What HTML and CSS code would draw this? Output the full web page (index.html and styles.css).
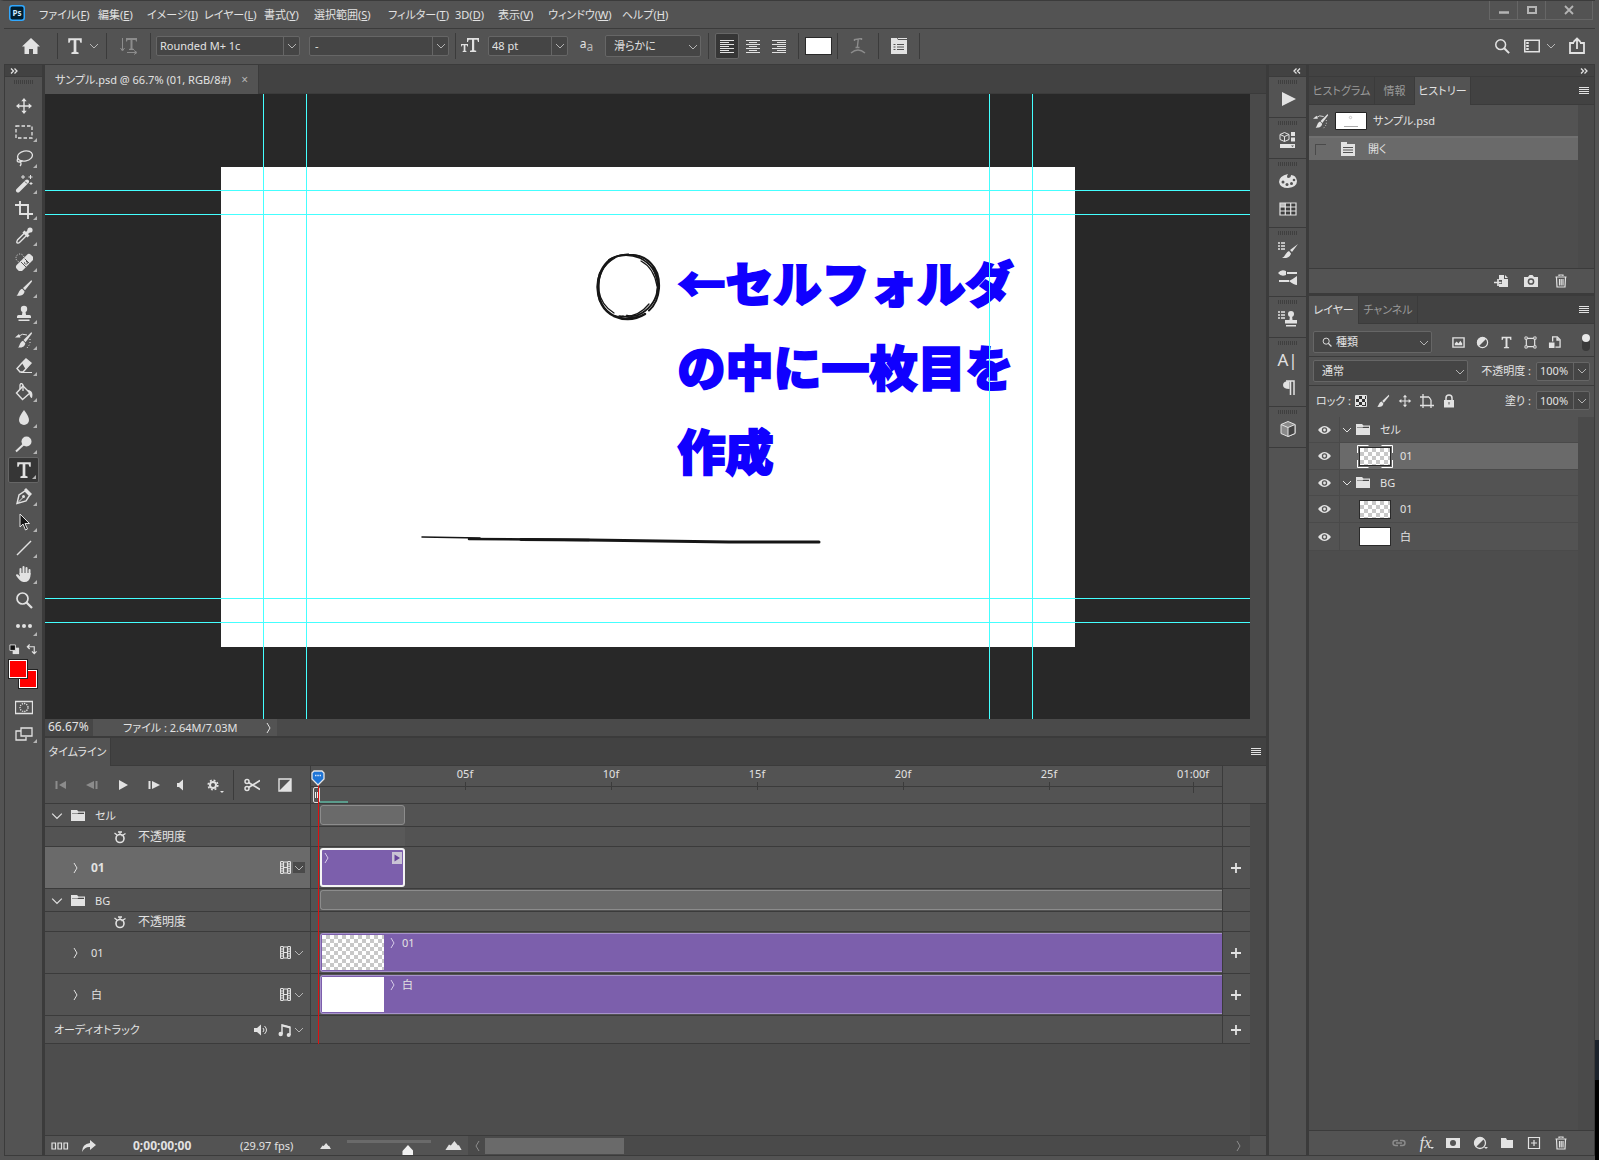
FILE: index.html
```html
<!DOCTYPE html>
<html lang="ja">
<head>
<meta charset="utf-8">
<title>サンプル.psd</title>
<link rel="stylesheet" href="styles.css">
</head>
<body>
<svg class="defs" aria-hidden="true">
  <symbol id="chev" viewBox="0 0 10 10"><path d="M1 3l4 4 4-4" fill="none" stroke="currentColor"/></symbol>
  <symbol id="chev-r" viewBox="0 0 10 10"><path d="M3 0l3 5-3 5" fill="none" stroke="currentColor"/></symbol>
  <symbol id="menu" viewBox="0 0 10 10"><path d="M0 1.500h10M0 3.500h10M0 5.500h10M0 7.500h10" stroke="currentColor"/></symbol>
  <symbol id="dbl" viewBox="0 0 8 6"><path d="M1 .5L3.500 3 1 5.500M4.500 .5L7 3 4.500 5.500" fill="none" stroke="currentColor" stroke-width="1.300"/></symbol>
  <symbol id="T" viewBox="0 0 16 16"><path d="M2 1h12v4h-1.200l-.8-2.200H9.200v10.400l2 .6V15H4.800v-1.200l2-.6V2.800H4L3.200 5H2z" fill="currentColor"/></symbol>
  <symbol id="folder" viewBox="0 0 14 11"><path d="M0 0h6l1.500 1.500H14V11H0z" fill="currentColor"/><path d="M1 3.500h5.500L7.500 2.700H13v1.300H1z" fill="#484848"/></symbol>
  <symbol id="eye" viewBox="0 0 14 10"><path d="M0 5q7-8.500 14 0q-7 8.500-14 0z" fill="currentColor"/><circle cx="7" cy="5" r="2.900" fill="#535353"/><circle cx="7" cy="5" r="1.500" fill="currentColor"/></symbol>
  <symbol id="brush" viewBox="0 0 18 18"><path d="M16.500 1L8 9l2 2.200L17 2.500z" fill="currentColor"/><path d="M7.200 9.700l2.300 2.500C9.500 16 5 17.200 1.500 16.500 4 15 3.500 11 7.200 9.700z" fill="currentColor"/></symbol>
  <symbol id="move" viewBox="0 0 18 18"><path d="M9 3v12M3 9h12" stroke="currentColor" stroke-width="1.400"/><path d="M9 1l2.700 3.300H6.300zM9 17l2.700-3.300H6.300zM1 9l3.300-2.700v5.400zM17 9l-3.300-2.700v5.400z" fill="currentColor"/></symbol>
  <symbol id="trash" viewBox="0 0 14 14"><path d="M5 2V1h4v1M1.500 3h11M2.500 3.500l.5 9.500h8l.5-9.500M5.500 5v6.500M7.200 5v6.500M9 5v6.500" fill="none" stroke="currentColor" stroke-width="1.200"/></symbol>
  <symbol id="hist" viewBox="0 0 18 18"><path d="M16.500 1L8.500 9l2 2.200L17 2.500z" fill="currentColor"/><path d="M8 9.700l2.300 2.500C10 16 6 17 3 16.500 5 15 4.500 11 8 9.700zM0 6.500l4-3.500 1.500 3.500z" fill="currentColor"/><path d="M4 5q3-3 8-1" fill="none" stroke="currentColor"/><path d="M15 8v5l-3 4" fill="none" stroke="currentColor" stroke-dasharray="1 2"/></symbol>
  <symbol id="stamp" viewBox="0 0 18 18"><circle cx="9" cy="4" r="3.200" fill="currentColor"/><path d="M7.700 5h2.600l.7 5h3.500q1.500 0 1.500 1.500V13H2v-1.500Q2 10 3.500 10H7zM3.500 14.500h11V16h-11z" fill="currentColor"/></symbol>
  <symbol id="film" viewBox="0 0 11 13"><path d="M.5.500v12M3.500.5v12M7.500.5v12M10.500.5v12M3.500 1h4M3.500 6.500h4M3.500 12h4" fill="none" stroke="currentColor" stroke-width="1.200"/><path d="M2 0v13M9 0v13" stroke="currentColor" stroke-width="2.500" stroke-dasharray="1 1.400"/></symbol>
  <symbol id="watch" viewBox="0 0 14 14"><circle cx="7" cy="8.500" r="4" fill="none" stroke="currentColor" stroke-width="1.600"/><path d="M5 2h4M7 2v3M1.500 3L4 5M8.500 6l4-2.500" stroke="currentColor" stroke-width="1.300"/></symbol>
  <symbol id="half" viewBox="0 0 14 14"><circle cx="7" cy="7" r="5.500" fill="none" stroke="currentColor" stroke-width="1.300"/><path d="M11 3A5.500 5.500 0 103 11z" fill="currentColor"/></symbol>
  <symbol id="plus" viewBox="0 0 10 10"><path d="M5 0v10M0 5h10" stroke="currentColor" stroke-width="1.800"/></symbol>
  <symbol id="lens" viewBox="0 0 18 18"><circle cx="7.500" cy="7.500" r="5.500" fill="none" stroke="currentColor" stroke-width="1.700"/><path d="M11.500 11.500L17 17" stroke="currentColor" stroke-width="2.300"/></symbol>
  <symbol id="mount" viewBox="0 0 18 10"><path d="M0 10l4-6 2 1 4-5 4 5 1-.5L18 10z" fill="currentColor"/></symbol>
</svg>

<div class="screen">
<div class="app">
  <header class="menubar">
    <svg class="logo" viewBox="0 0 16 16"><rect x=".75" y=".75" width="14.500" height="14.500" rx="2.500" fill="#001d2e" stroke="#31a8ff" stroke-width="1.500"/><text x="8" y="11" text-anchor="middle" font-size="8" font-weight="700" fill="#cfeaff">Ps</text></svg>
    <nav class="menus">
      <a href="#">ファイル(<u>F</u>)</a><a href="#">編集(<u>E</u>)</a><a href="#">イメージ(<u>I</u>)</a><a href="#">レイヤー(<u>L</u>)</a><a href="#">書式(<u>Y</u>)</a><a href="#">選択範囲(<u>S</u>)</a><a href="#">フィルター(<u>T</u>)</a><a href="#">3D(<u>D</u>)</a><a href="#">表示(<u>V</u>)</a><a href="#">ウィンドウ(<u>W</u>)</a><a href="#">ヘルプ(<u>H</u>)</a>
    </nav>
    <div class="winctl">
      <button aria-label="最小化"><svg viewBox="0 0 12 12"><path d="M1 8.500h10" stroke="currentColor" stroke-width="2.500"/></svg></button>
      <button aria-label="最大化"><svg viewBox="0 0 12 12"><rect x="2" y="3" width="8" height="6" fill="none" stroke="currentColor" stroke-width="2"/></svg></button>
      <button class="close" aria-label="閉じる"><svg viewBox="0 0 12 12"><path d="M2 2l8 8M10 2l-8 8" stroke="currentColor" stroke-width="1.800"/></svg></button>
    </div>
  </header>

  <div class="options">
    <button class="cell home" aria-label="ホーム"><svg class="i18" viewBox="0 0 18 18"><path d="M9 1L0 9.500h2.500V17H7v-5h4v5h4.500V9.500H18z" fill="currentColor"/></svg></button>
    <button class="cell tcell" aria-label="文字ツール"><svg class="i18"><use href="#T"/></svg><svg class="i10 dim"><use href="#chev"/></svg></button>
    <button class="cell orient faint" aria-label="方向の切り替え"><svg class="i18" viewBox="0 0 18 18"><path d="M2.500 1v12M.5 11l2 3 2-3M7 15.500h9M14 13.500l3 2-3 2" fill="none" stroke="currentColor"/><path d="M6 1h11v3.500h-1L15.500 3H12.500v8.500l1.500.5v1H9v-1l1.500-.5V3H7.500L7 4.500H6z" fill="currentColor"/></svg></button>
    <div class="combo font"><input aria-label="フォント" value="Rounded M+ 1c"><button aria-label="フォント一覧"><svg class="i10"><use href="#chev"/></svg></button></div>
    <div class="combo style"><input aria-label="スタイル" value="-"><button aria-label="スタイル一覧"><svg class="i10"><use href="#chev"/></svg></button></div>
    <span class="sep"></span>
    <span class="cell size"><svg class="i18" viewBox="0 0 18 18"><path d="M6 1h12v4h-1l-.7-2.300h-3.100v10.600l2 .5V15H9v-1.200l2-.5V2.700H7.700L7 5H6zM0 7h7v2.500h-.8L5.900 8.200H4.400v5.600l1 .3V15H1.700v-.9l1-.3V8.200H1L.7 9.500H0z" fill="currentColor"/></svg></span>
    <div class="combo pt"><input aria-label="フォントサイズ" value="48 pt"><button aria-label="サイズ一覧"><svg class="i10"><use href="#chev"/></svg></button></div>
    <span class="cell aa">a<small>a</small></span>
    <div class="select smooth"><select aria-label="アンチエイリアス"><option>滑らかに</option></select><svg class="i10"><use href="#chev"/></svg></div>
    <span class="sep wide"></span>
    <div class="aligns">
      <button class="on" aria-label="左揃え"><svg viewBox="0 0 14 14"><path d="M0 1.500h14M0 3.500h9M0 5.500h14M0 7.500h9M0 9.500h14M0 11.500h9M0 13.500h14" stroke="currentColor"/></svg></button>
      <button aria-label="中央揃え"><svg viewBox="0 0 14 14"><path d="M0 1.500h14M3 3.500h8M0 5.500h14M3 7.500h8M0 9.500h14M3 11.500h8M0 13.500h14" stroke="currentColor"/></svg></button>
      <button aria-label="右揃え"><svg viewBox="0 0 14 14"><path d="M0 1.500h14M5 3.500h9M0 5.500h14M5 7.500h9M0 9.500h14M5 11.500h9M0 13.500h14" stroke="currentColor"/></svg></button>
    </div>
    <span class="sep wide"></span>
    <button class="colour" aria-label="テキストカラー"></button>
    <span class="sep"></span>
    <button class="cell c40 faint" aria-label="ワープ"><svg class="i16" viewBox="0 0 16 16"><path d="M4.500 3V1.500l7-1V2M8.300 1l-1 8.500M5.500 9.500h4M1 15q7-6 14 0" fill="none" stroke="currentColor" stroke-width="1.400"/></svg></button>
    <button class="cell c40" aria-label="文字パネル"><svg class="i16" viewBox="0 0 16 16"><path d="M0 0h6l1 2h9v14H0z" fill="currentColor"/><path d="M7 .5h9" stroke="currentColor"/><path d="M2.500 6.500h2M2.500 9h2M2.500 11.500h2M6 6.500h7M6 9h7M6 11.500h7" stroke="#535353"/></svg></button>
    <div class="right">
      <button aria-label="検索"><svg class="i16"><use href="#lens"/></svg></button>
      <button class="ws" aria-label="ワークスペース"><svg class="i16" viewBox="0 0 16 14"><path d="M.75 1.250h14.500v11.500H.75z" fill="none" stroke="currentColor" stroke-width="1.500"/><path d="M3.500 3v8" stroke="currentColor" stroke-width="2.500" stroke-dasharray="2 1"/></svg><svg class="i10 dim"><use href="#chev"/></svg></button>
      <button aria-label="共有"><svg class="i18" viewBox="0 0 18 18"><path d="M6 6H2v10h14V6h-4M9 12V2M5.500 5L9 1.500 12.500 5" fill="none" stroke="currentColor" stroke-width="1.800"/></svg></button>
    </div>
  </div>

  <div class="body">
    <aside class="tools">
      <div class="strip"><svg><use href="#dbl"/></svg></div>
      <div class="grip"></div>
      <div class="toollist">
        <button class="solo" aria-label="移動"><svg><use href="#move"/></svg></button>
        <button aria-label="長方形選択"><svg viewBox="0 0 18 18"><rect x="1" y="3" width="16" height="12" fill="none" stroke="currentColor" stroke-width="1.300" stroke-dasharray="3.500 2"/></svg></button>
        <button aria-label="なげなわ"><svg viewBox="0 0 18 18"><ellipse cx="10" cy="7" rx="7.500" ry="5" transform="rotate(-12 10 7)" fill="none" stroke="currentColor" stroke-width="1.300"/><path d="M3 9q-2 4 1 4t3-2M5 12q2 3 0 5" fill="none" stroke="currentColor" stroke-width="1.300"/></svg></button>
        <button aria-label="自動選択"><svg viewBox="0 0 18 18"><path d="M3 15.500L12 6.500" stroke="currentColor" stroke-width="4" stroke-linecap="round"/><path d="M10 6.500l2 2" stroke="#535353"/><path d="M8 0v4M6 2h4M15.500 0v4M13.500 2h4M16 7v3M14.500 8.500h3" stroke="currentColor"/></svg></button>
        <button aria-label="切り抜き"><svg viewBox="0 0 18 18"><path d="M0 4h13v9M5 0v13h13M13 13v5" fill="none" stroke="currentColor" stroke-width="1.900"/></svg></button>
        <button aria-label="スポイト"><svg viewBox="0 0 18 18"><path d="M10 5.500L2.500 13q-1.500 3 0 3 1 .5 2.500-1l7.500-7.500" fill="none" stroke="currentColor" stroke-width="1.400"/><path d="M8.500 4.500l5 5M11 7l4-4" stroke="currentColor" stroke-width="3"/><circle cx="15" cy="3" r="2.600" fill="currentColor"/></svg></button>
        <button aria-label="スポット修復"><svg viewBox="0 0 18 18"><rect x="-1" y="6" width="20" height="8" rx="3" transform="rotate(-45 9 9)" fill="currentColor"/><path d="M6 9l5 5M9.500 5.500l5 5" stroke="#535353"/><path d="M9 10h1M11 8.500h1M10.500 11h1M12 10h1" stroke="#535353" stroke-width="1.300"/><circle cx="5" cy="5" r="4" fill="none" stroke="currentColor" stroke-dasharray="1 1.500"/></svg></button>
        <button aria-label="ブラシ"><svg><use href="#brush"/></svg></button>
        <button aria-label="コピースタンプ"><svg><use href="#stamp"/></svg></button>
        <button aria-label="ヒストリーブラシ"><svg><use href="#hist"/></svg></button>
        <button aria-label="消しゴム"><svg viewBox="0 0 18 18"><path d="M7 6l4-4 5 4-5.500 6z" fill="currentColor"/><path d="M7 6l-5 5.500 3 3.500h3l8-9-5-4z" fill="none" stroke="currentColor" stroke-width="1.400"/><path d="M6 15.500h11" stroke="currentColor"/></svg></button>
        <button aria-label="塗りつぶし"><svg viewBox="0 0 18 18"><path d="M8 3L1.500 10l6 6.500L15 10z" fill="none" stroke="currentColor" stroke-width="1.400"/><path d="M8 8V2q-2-3-3 0v4" fill="none" stroke="currentColor" stroke-width="1.300"/><path d="M12 7q7 0 5 8-2 0-3-5z" fill="currentColor"/></svg></button>
        <button aria-label="ぼかし"><svg viewBox="0 0 18 18"><path d="M9 1q5 6.500 5 10a5 5 0 01-10 0Q4 7.500 9 1z" fill="currentColor"/></svg></button>
        <button aria-label="覆い焼き"><svg viewBox="0 0 18 18"><circle cx="11.500" cy="6.500" r="5" fill="currentColor"/><path d="M1 16.500L9 9" stroke="currentColor" stroke-width="2"/></svg></button>
        <button class="on" aria-label="横書き文字"><svg><use href="#T"/></svg></button>
        <button aria-label="ペン"><svg viewBox="0 0 18 18"><path d="M2 16.500L4 8l6-4 4.500 4.500L11 14z" fill="none" stroke="currentColor" stroke-width="1.400"/><path d="M11 1l6 6-2 2-6-6z" fill="currentColor"/><path d="M2 16.500l6-6" stroke="currentColor"/><circle cx="8.500" cy="9.500" r="1.500" fill="currentColor"/></svg></button>
        <button aria-label="パス選択"><svg viewBox="0 0 18 18"><path d="M5 1v13l3-3 2.500 6 2-1L10 10.500h4.500z" fill="#161616" stroke="currentColor"/></svg></button>
        <button aria-label="ライン"><svg viewBox="0 0 18 18"><path d="M2 16L16 2" stroke="currentColor" stroke-width="1.400"/></svg></button>
        <button aria-label="手のひら"><svg viewBox="0 0 18 18"><path d="M5.500 9V4M8.500 8V2M11.500 8V3M14.500 9V5" stroke="currentColor" stroke-width="2" stroke-linecap="round"/><path d="M4.500 8h11q.5 5-2 7.500-2 2-5 1.500Q5 16.500 1 10.500q0-2 2-1l2 2z" fill="currentColor"/></svg></button>
        <button class="solo" aria-label="ズーム"><svg><use href="#lens"/></svg></button>
        <button aria-label="ツールバーを編集"><svg viewBox="0 0 18 18"><circle cx="3" cy="9" r="2" fill="currentColor"/><circle cx="9" cy="9" r="2" fill="currentColor"/><circle cx="15" cy="9" r="2" fill="currentColor"/></svg></button>
      </div>
      <div class="mini"><svg viewBox="0 0 12 12"><path d="M4 4h7v7H4z" fill="#e0e0e0"/><path d="M1 1h6v6H1z" fill="#111" stroke="#e0e0e0"/></svg><svg viewBox="0 0 12 12"><path d="M2 3h7v7M4 .5L1.500 3 4 5.500M6.500 8L9 10.500 11.500 8" fill="none" stroke="#e0e0e0" stroke-width="1.300"/></svg></div>
      <div class="swatches"><button class="bg" aria-label="背景色"></button><button class="fg" aria-label="描画色"></button></div>
      <div class="toollist">
        <button class="solo" aria-label="クイックマスク"><svg viewBox="0 0 18 18"><path d="M.5 3.500h17v12H.5z" fill="none" stroke="currentColor" stroke-width="1.300"/><circle cx="9" cy="9.500" r="4" fill="none" stroke="currentColor" stroke-width="1.300" stroke-dasharray="1.300 1"/></svg></button>
        <button aria-label="スクリーンモード"><svg viewBox="0 0 18 18"><path d="M6 7H1v9h10v-3" fill="none" stroke="currentColor" stroke-width="1.300"/><path d="M6 4h11v8H6z" fill="none" stroke="currentColor" stroke-width="1.300"/></svg></button>
      </div>
    </aside>

    <main class="work">
      <div class="tabs doctabs"><div class="tab on">サンプル.psd @ 66.7% (01, RGB/8#)<button aria-label="閉じる">×</button></div></div>
      <div class="viewport">
        <div class="canvas">
          <div class="artboard">
            <svg class="sketch" viewBox="0 0 854 480"><g fill="none" stroke="#161616" stroke-linecap="round">
              <path d="M390 92q-13 10-13 28 0 21 16 29 16 7 31-2" stroke-width="2.500"/>
              <path d="M388 93q10-6 20-5.500 14 0 22 9 9 9 8 25-1 14-10 22" stroke-width="2"/>
              <path d="M391 91q14-6 28 0 16 8 18 26 0 17-13 27-9 7-18 4.500" stroke-width="1.800"/>
              <path d="M420 94q13 7 16 25M394 91q-18 10-16 33 2 14 15 22M398 149q18 3 30-12M402 149q8 3 16 0" stroke-width="1.300"/>
              <path d="M379 106q-5 14 0 28M432 101q7 12 4 26" stroke-width="2.200"/>
              <path d="M201 370l58 1" stroke-width="1.500"/><path d="M248 372l120 1" stroke-width="2.500"/><path d="M300 372.500l68 .5 140 2h90" stroke-width="3"/></g></svg>
            <p class="note">←セルフォルダ<br>の中に一枚目を<br>作成</p>
            <i class="guide v g05"></i><i class="guide v g10"></i><i class="guide v g90"></i><i class="guide v g95"></i>
            <i class="guide h g05"></i><i class="guide h g10"></i><i class="guide h g90"></i><i class="guide h g95"></i>
          </div>
        </div>
        <div class="vscroll"></div>
      </div>
      <div class="status"><span class="zoom">66.67%</span><span class="file">ファイル : 2.64M/7.03M<svg class="i10"><use href="#chev-r"/></svg></span></div>

      <section class="timeline">
        <div class="tabs"><div class="tab on">タイムライン</div><button class="pmenu" aria-label="メニュー"><svg class="i10"><use href="#menu"/></svg></button></div>
        <div class="tlhead">
          <div class="play">
            <button class="faint" aria-label="先頭"><svg viewBox="0 0 12 12"><path d="M1.500 2v8" stroke="currentColor" stroke-width="2"/><path d="M11 2v8L4 6z" fill="currentColor"/></svg></button>
            <button class="faint" aria-label="前フレーム"><svg viewBox="0 0 12 12"><path d="M8 2v8L0 6z" fill="currentColor"/><path d="M10.500 2v8" stroke="currentColor" stroke-width="2"/></svg></button>
            <button aria-label="再生"><svg viewBox="0 0 12 12"><path d="M2 1l9 5-9 5z" fill="currentColor"/></svg></button>
            <button aria-label="次フレーム"><svg viewBox="0 0 12 12"><path d="M1.500 2v8" stroke="currentColor" stroke-width="2"/><path d="M4 2v8l8-4z" fill="currentColor"/></svg></button>
            <button class="snd" aria-label="音声"><svg viewBox="0 0 12 12"><path d="M2 4h2l4-3.500v11L4 8H2z" fill="currentColor"/></svg></button>
            <button class="gear caret" aria-label="設定"><svg viewBox="0 0 12 12"><circle cx="6" cy="6" r="3" fill="none" stroke="currentColor" stroke-width="2"/><circle cx="6" cy="6" r="4.800" fill="none" stroke="currentColor" stroke-width="1.600" stroke-dasharray="1.900 1.870"/></svg></button>
            <span class="tsep"></span>
            <button class="big" aria-label="分割"><svg viewBox="0 0 16 14"><circle cx="3" cy="3.500" r="2" fill="none" stroke="currentColor" stroke-width="1.500"/><circle cx="3" cy="10.500" r="2" fill="none" stroke="currentColor" stroke-width="1.500"/><path d="M4.500 4.500L16 11.500M4.500 9.500L16 2.500" stroke="currentColor" stroke-width="1.700"/></svg></button>
            <button class="big" aria-label="トランジション"><svg viewBox="0 0 14 14"><path d="M1 1h12v12H1z" fill="none" stroke="currentColor" stroke-width="1.400"/><path d="M13 1v12H1z" fill="currentColor"/></svg></button>
          </div>
          <div class="ruler"><span>05f</span><span>10f</span><span>15f</span><span>20f</span><span>25f</span><span class="last">01:00f</span><i class="cached"></i><i class="area"></i></div>
          <div></div>
        </div>
        <div class="tracks">
          <div class="rows">
            <div class="row group"><div class="name"><svg class="i12"><use href="#chev"/></svg><svg class="fold"><use href="#folder"/></svg><span>セル</span></div><div class="lane"><div class="clip grey short"></div></div><div></div></div>
            <div class="row prop"><div class="name"><svg class="i14"><use href="#watch"/></svg><span>不透明度</span></div><div class="lane"><div class="band short"></div></div><div></div></div>
            <div class="row track sel"><div class="name"><svg class="i10"><use href="#chev-r"/></svg><b>01</b><svg class="film"><use href="#film"/></svg><button aria-label="トラック設定"><svg class="i10"><use href="#chev"/></svg></button></div><div class="lane"><div class="clip purple short picked"><svg class="i10"><use href="#chev-r"/></svg><svg class="end" viewBox="0 0 10 12"><path d="M0 0h10v12H0z" fill="#c9c3d4"/><path d="M2.500 2.500L8 6 2.500 9.500z" fill="#67449a"/></svg></div></div><div class="add"><button aria-label="追加"><svg class="i10"><use href="#plus"/></svg></button></div></div>
            <div class="row group"><div class="name"><svg class="i12"><use href="#chev"/></svg><svg class="fold"><use href="#folder"/></svg><span>BG</span></div><div class="lane"><div class="clip grey"></div></div><div></div></div>
            <div class="row prop"><div class="name"><svg class="i14"><use href="#watch"/></svg><span>不透明度</span></div><div class="lane"><div class="band"></div></div><div></div></div>
            <div class="row track"><div class="name"><svg class="i10"><use href="#chev-r"/></svg><span>01</span><svg class="film"><use href="#film"/></svg><button aria-label="トラック設定"><svg class="i10"><use href="#chev"/></svg></button></div><div class="lane"><div class="clip purple"><div class="thumb check"></div><svg class="i10"><use href="#chev-r"/></svg><span>01</span></div></div><div class="add"><button aria-label="追加"><svg class="i10"><use href="#plus"/></svg></button></div></div>
            <div class="row track"><div class="name"><svg class="i10"><use href="#chev-r"/></svg><span>白</span><svg class="film"><use href="#film"/></svg><button aria-label="トラック設定"><svg class="i10"><use href="#chev"/></svg></button></div><div class="lane"><div class="clip purple"><div class="thumb"></div><svg class="i10"><use href="#chev-r"/></svg><span>白</span></div></div><div class="add"><button aria-label="追加"><svg class="i10"><use href="#plus"/></svg></button></div></div>
            <div class="row audio"><div class="name"><span>オーディオトラック</span><svg class="spk" viewBox="0 0 14 12"><path d="M0 4h3l4-3.500v11L3 8H0z" fill="currentColor"/><path d="M9 4q2 2 0 4M10.500 2q4 4 0 8" fill="none" stroke="currentColor"/></svg><svg class="i14" viewBox="0 0 14 14"><path d="M4 11V2l8 2v8" fill="none" stroke="currentColor" stroke-width="1.500"/><path d="M4 1.500l8 2v2l-8-2z" fill="currentColor"/><circle cx="2.700" cy="11" r="2.200" fill="currentColor"/><circle cx="10.700" cy="12" r="2" fill="currentColor"/></svg><button aria-label="オーディオ設定"><svg class="i10"><use href="#chev"/></svg></button></div><div class="lane"></div><div class="add"><button aria-label="追加"><svg class="i10"><use href="#plus"/></svg></button></div></div>
            <div class="playhead"><svg viewBox="0 0 14 16"><path d="M1 3L3 1h8l2 2v6l-6 6-6-6z" fill="#1f75d6" stroke="#e6e6e6" stroke-width="1.300"/><path d="M4 5.500h1.500M6.300 5.500h1.500M8.600 5.500H10" stroke="#d8e8fb" stroke-width="1.500"/></svg></div>
          </div>
          <div class="vscroll"></div>
        </div>
        <div class="tlfoot">
          <button aria-label="フレームアニメーション"><svg class="i18" viewBox="0 0 18 10"><path d="M1 2h3.500v6H1zM7 2h3.500v6H7zM13 2h3.500v6H13z" fill="none" stroke="currentColor" stroke-width="1.200"/></svg></button>
          <button aria-label="書き出し"><svg class="i14" viewBox="0 0 14 12"><path d="M8 0l6 5-6 5V7Q3 6.500 0 12 0 4 8 3z" fill="currentColor"/></svg></button>
          <b>0;00;00;00</b><span class="fps">(29.97 fps)</span>
          <svg class="m1"><use href="#mount"/></svg><input type="range" min="0" max="100" value="76" aria-label="タイムラインのズーム"><svg class="m2"><use href="#mount"/></svg>
          <div class="hscroll"><svg class="i10 flip"><use href="#chev-r"/></svg><i></i><svg class="i10 push"><use href="#chev-r"/></svg></div>
        </div>
      </section>
    </main>

    <aside class="dock">
      <div class="strip"><svg class="flip"><use href="#dbl"/></svg></div>
      <div class="grp"><button aria-label="アクション"><svg viewBox="0 0 18 18"><path d="M3 2l14 7-14 7z" fill="currentColor"/></svg></button></div>
      <div class="grp"><button aria-label="プロパティ"><svg viewBox="0 0 18 18"><path d="M5.500 1.500L10 3.500v5l-4.500 2-4.500-2v-5zM1 3.500l4.500 2 4.500-2M5.500 5.500v5" fill="none" stroke="currentColor"/><path d="M12 1h4v4h-4zM12 6.500h4v4h-4zM1 13h15v4H1z" fill="currentColor"/><path d="M12 14.500h3l-1.500 1.500z" fill="#535353"/></svg></button></div>
      <div class="grp"><button aria-label="カラー"><svg viewBox="0 0 18 18"><path d="M9 2Q0 4 0 10q1 6 9 6 9-1 9-7-1-6-6-6 0 3-3 3-2-1 0-4z" fill="currentColor"/><g fill="#535353"><circle cx="4" cy="10" r="1.500"/><circle cx="8" cy="12.500" r="1.500"/><circle cx="12.500" cy="11.500" r="1.500"/><circle cx="15" cy="8" r="1.300"/></g></svg></button><button aria-label="スウォッチ"><svg viewBox="0 0 18 18"><path d="M1 3h16v12H1z" fill="#3c3c3c"/><path d="M1 3h5v4H1z" fill="#bbb"/><path d="M1 3h16v12H1zM1 7h16M1 11h16M6.300 3v12M11.700 3v12" fill="none" stroke="currentColor" stroke-width="1.200"/></svg></button></div>
      <div class="grp"><button aria-label="ブラシプリセット"><svg class="i20" viewBox="0 0 20 18"><path d="M0 2h2M0 5h2M0 8h2M3 2h4M3 5h4M3 8h4" stroke="currentColor" stroke-width="1.600"/><path d="M20 3l-8 6 2 2zM11 10l2 2.500c-1 4-5 5-9 4.500 3-1 3-5 7-7z" fill="currentColor"/></svg></button><button aria-label="ブラシ設定"><svg class="i20" viewBox="0 0 20 18"><path d="M9 4h10M1 12h10" stroke="currentColor" stroke-width="2"/><path d="M0 4q3-4 8-2v4Q3 8 0 4zM11 12q4-2 8-5v9q-3 0-8-4z" fill="currentColor"/></svg></button></div>
      <div class="grp"><button aria-label="コピーソース"><svg class="i20" viewBox="0 0 20 18"><path d="M0 2h2M0 5h2M0 8h2M3 2h4M3 5h4M3 8h4" stroke="currentColor" stroke-width="1.600"/><circle cx="13" cy="4" r="3" fill="currentColor"/><path d="M12 5h2l.5 5H19v3.500H7V10h4.500zM8 15h10v1.500H8z" fill="currentColor"/></svg></button></div>
      <div class="grp"><button class="char" aria-label="文字">A|</button><button aria-label="段落"><svg viewBox="0 0 18 18"><path d="M7 2h8v14M11.500 2v14" fill="none" stroke="currentColor" stroke-width="1.500"/><path d="M10.500 2v8Q4 10 4 6t6.500-4z" fill="currentColor"/></svg></button></div>
      <div class="grp"><button aria-label="3D"><svg viewBox="0 0 18 18"><path d="M9 1.500l7 3v9l-7 3-7-3v-9z" fill="#8a8a8a" stroke="currentColor"/><path d="M9 7.500l7-3v9l-7 3z" fill="#444" stroke="currentColor"/><path d="M2 4.500l7 3" stroke="currentColor"/></svg></button></div>
    </aside>

    <aside class="panels">
      <div class="strip"><svg><use href="#dbl"/></svg></div>
      <section class="panel history">
        <div class="tabs"><div class="tab">ヒストグラム</div><div class="tab">情報</div><div class="tab on">ヒストリー</div><button class="pmenu" aria-label="メニュー"><svg class="i10"><use href="#menu"/></svg></button></div>
        <div class="scrollbox">
          <div class="list">
            <div class="snap"><svg class="i16"><use href="#hist"/></svg><svg class="pic" viewBox="0 0 32 18"><path d="M.5.500h31v17H.5z" fill="#fff" stroke="#222"/><circle cx="15.500" cy="5.500" r="1.200" fill="none" stroke="#aaa" stroke-width=".6"/><path d="M9 14.500h14" stroke="#aaa"/></svg><span>サンプル.psd</span></div>
            <div class="state"><i class="box"></i><svg class="i16" viewBox="0 0 16 16"><path d="M1 1h6v2h8v12H1z" fill="currentColor"/><path d="M3 6.500h10M3 9h10M3 11.500h10" stroke="#535353"/></svg><span>開く</span></div>
          </div>
          <div class="vscroll"></div>
        </div>
        <div class="foot"><button aria-label="新規ドキュメント"><svg viewBox="0 0 14 14"><path d="M5 1h5v4h4v8H5v-3h3V6H5z" fill="currentColor"/><path d="M11 1l3 3h-3z" fill="currentColor"/><path d="M4 5v7M0 8.500h7.500" stroke="currentColor" stroke-width="1.700"/></svg></button><button aria-label="新規スナップショット"><svg viewBox="0 0 14 14"><path d="M0 3h4l1.500-2h3L10 3h4v10H0z" fill="currentColor"/><circle cx="7" cy="7.500" r="2.600" fill="none" stroke="#535353" stroke-width="1.500"/></svg></button><button aria-label="削除"><svg><use href="#trash"/></svg></button></div>
      </section>
      <section class="panel layers">
        <div class="tabs"><div class="tab on">レイヤー</div><div class="tab">チャンネル</div><button class="pmenu" aria-label="メニュー"><svg class="i10"><use href="#menu"/></svg></button></div>
        <div class="bar filter">
          <div class="select kind"><svg class="mag"><use href="#lens"/></svg><select aria-label="フィルター"><option>種類</option></select><svg class="i10"><use href="#chev"/></svg></div>
          <div class="ficons">
            <button aria-label="ピクセル"><svg viewBox="0 0 14 14"><path d="M1 2h12v10H1z" fill="none" stroke="currentColor" stroke-width="1.500"/><path d="M3 10V8l2-2 2 2 2-3 2 3v2z" fill="currentColor"/></svg></button><button aria-label="調整"><svg><use href="#half"/></svg></button><button aria-label="テキスト"><svg><use href="#T"/></svg></button><button aria-label="シェイプ"><svg viewBox="0 0 14 14"><path d="M2.500 2.500h9v9h-9z" fill="none" stroke="currentColor" stroke-width="1.300"/><path d="M1 1h2.500v2.500H1zM10.500 1H13v2.500h-2.500zM1 10.500h2.500V13H1zM10.500 10.500H13V13h-2.500z" fill="#535353" stroke="currentColor"/></svg></button><button aria-label="スマートオブジェクト"><svg viewBox="0 0 14 14"><path d="M5 6V1h5l3 3v8H8" fill="none" stroke="currentColor" stroke-width="1.400"/><path d="M1 7h6v6H1zM9 1l4 4H9z" fill="currentColor"/></svg></button>
          </div>
          <button class="toggle" aria-label="フィルターのオン/オフ"></button>
        </div>
        <div class="bar">
          <div class="select blend"><select aria-label="描画モード"><option>通常</option></select><svg class="i10"><use href="#chev"/></svg></div>
          <label for="op">不透明度 :</label><div class="combo pct"><input id="op" value="100%"><button aria-label="不透明度"><svg class="i10"><use href="#chev"/></svg></button></div>
        </div>
        <div class="bar lock">
          <span class="lbl">ロック :</span>
          <div class="licons"><button aria-label="透明"><svg viewBox="0 0 14 14"><path d="M1.500 1.500h11v11h-11z" fill="#333" stroke="currentColor"/><path d="M2 2h3v3H2zM8 2h3v3H8zM5 5h3v3H5zM11 5h2v3h-2zM2 8h3v3H2zM8 8h3v3H8zM5 11h3v2H5z" fill="currentColor"/></svg></button><button aria-label="画像"><svg><use href="#brush"/></svg></button><button aria-label="位置"><svg><use href="#move"/></svg></button><button aria-label="アートボード"><svg viewBox="0 0 14 14"><path d="M3 0v14M0 3h9M11 6v8M0 11.500h14M9 3l2 3" fill="none" stroke="currentColor" stroke-width="1.300"/></svg></button><button aria-label="すべて"><svg viewBox="0 0 14 14"><path d="M2 6h10v7.500H2z" fill="currentColor"/><path d="M4 6V4q0-3 3-3t3 3v2" fill="none" stroke="currentColor" stroke-width="1.500"/><path d="M7 8v2.500" stroke="#535353"/></svg></button></div>
          <label for="fl">塗り :</label><div class="combo pct"><input id="fl" value="100%"><button aria-label="塗り"><svg class="i10"><use href="#chev"/></svg></button></div>
        </div>
        <div class="scrollbox">
          <ul class="list">
            <li class="lfolder"><button aria-label="表示"><svg><use href="#eye"/></svg></button><div><svg class="i10"><use href="#chev"/></svg><svg class="fold"><use href="#folder"/></svg><span>セル</span></div></li>
            <li class="sel"><button aria-label="表示"><svg><use href="#eye"/></svg></button><div><i class="lthumb check"><svg class="frame" viewBox="0 0 36 23"><path d="M.5 8V.5h11M24.500.5h11V8M35.500 15v7.500h-11M11.500 22.500H.5V15" fill="none" stroke="#fff"/></svg></i><span>01</span></div></li>
            <li class="lfolder"><button aria-label="表示"><svg><use href="#eye"/></svg></button><div><svg class="i10"><use href="#chev"/></svg><svg class="fold"><use href="#folder"/></svg><span>BG</span></div></li>
            <li><button aria-label="表示"><svg><use href="#eye"/></svg></button><div><i class="lthumb check"></i><span>01</span></div></li>
            <li><button aria-label="表示"><svg><use href="#eye"/></svg></button><div><i class="lthumb"></i><span>白</span></div></li>
          </ul>
          <div class="vscroll"></div>
        </div>
        <div class="foot"><button class="faint" aria-label="リンク"><svg viewBox="0 0 14 14"><path d="M6 4.500H3.500a2.500 2.500 0 000 5H6M8 4.500h2.500a2.500 2.500 0 010 5H8M4 7h6" fill="none" stroke="currentColor" stroke-width="1.400"/></svg></button><button class="fx caret" aria-label="スタイル">fx</button><button aria-label="マスク"><svg viewBox="0 0 14 14"><path d="M0 2h14v10H0z" fill="currentColor"/><circle cx="7" cy="7" r="3" fill="#535353"/></svg></button><button class="caret" aria-label="調整レイヤー"><svg><use href="#half"/></svg></button><button aria-label="グループ"><svg viewBox="0 0 14 14"><path d="M1 2h5l1 2h6v8H1z" fill="currentColor"/></svg></button><button aria-label="新規"><svg viewBox="0 0 14 14"><path d="M1.500 1.500h11v11h-11zM7 4v6M4 7h6" fill="none" stroke="currentColor" stroke-width="1.200"/></svg></button><button aria-label="削除"><svg><use href="#trash"/></svg></button></div>
      </section>
    </aside>
  </div>
</div>
<div class="edge"></div>
</div>
</body>
</html>
```

FILE: styles.css
```css
:root {
  --bg: #535353;
  --line: #3b3b3b;
  --dark: #424242;
  --mid: #4d4d4d;
  --field: #454545;
  --sel: #6a6a6a;
  --ink: #e2e2e2;
}
* { box-sizing: border-box; }
body {
  margin: 0;
  background: var(--bg);
  color: var(--ink);
  font: 11px/16px "Noto Sans", "Noto Sans CJK JP", sans-serif;
  font-feature-settings: "palt";
  overflow: hidden;
}
button, input, select { font: inherit; color: inherit; margin: 0; font-feature-settings: inherit; }
button { background: none; border: 0; padding: 0; display: flex; align-items: center; justify-content: center; }
svg { display: block; flex: none; }
p, ul { margin: 0; padding: 0; list-style: none; }
.defs { position: absolute; width: 0; height: 0; }
.i10 { width: 10px; height: 10px; }
.i12 { width: 12px; height: 12px; }
.i14 { width: 14px; height: 14px; }
.i16 { width: 16px; height: 16px; }
.i18 { width: 18px; height: 18px; }
.dim { opacity: .7; }
.faint { color: #8c8c8c; }
.flip { transform: scaleX(-1); }
.check { background: #fff repeating-conic-gradient(#c8c8c8 0 25%, #fff 0 50%) 0 0 / 8px 8px; }

.screen { display: flex; height: 100vh; }
.app {
  flex: 1;
  min-width: 0;
  display: flex;
  flex-direction: column;
  border-top: 1px solid var(--line);
  border-bottom: 4px solid var(--bg);
  border-left: 4px solid var(--bg);
}
.edge { width: 4px; background: linear-gradient(#0000 calc(100% - 120px), #1c232c 0 calc(100% - 80px), #000 0); }

/* menu bar */
.menubar { display: flex; height: 28px; border-bottom: 1px solid var(--line); flex: none; padding-left: 5px; }
.logo { width: 16px; height: 16px; margin-top: 4px; }
.menus { display: grid; grid-template-columns: 59px 49px 57px 60px 50px 74px 67px 43px 50px 74px auto; align-items: center; margin-left: 14px; }
.menus a { color: inherit; text-decoration: none; white-space: nowrap; }
.winctl { display: flex; margin-left: auto; margin-right: 2px; height: 19px; border: 1px solid #666; border-top: 0; color: #b4b4b4; }
.winctl button { width: 28px; border-right: 1px solid #666; }
.winctl .close { width: 46px; border: 0; }
.winctl svg { width: 12px; height: 12px; }

/* options bar */
.options { display: flex; align-items: center; height: 36px; flex: none; border-bottom: 1px solid var(--line); padding-bottom: 1px; }
.cell { display: flex; align-items: center; justify-content: center; height: 26px; }
.home { width: 54px; border-right: 1px solid var(--line); }
.tcell { width: 49px; border-right: 1px solid var(--line); gap: 5px; }
.orient { width: 44px; border-right: 1px solid var(--line); margin-right: 5px; }
.combo { display: flex; height: 20px; background: var(--field); border: 1px solid #666; border-radius: 2px; }
.combo input { flex: 1; min-width: 0; width: 0; background: none; border: 0; padding: 0 3px; outline: 0; }
.combo button { width: 16px; border-left: 1px solid #666; color: #b4b4b4; }
.font { width: 144px; margin-right: 9px; }
.style { width: 140px; margin-right: 6px; }
.style input { padding-left: 5px; }
.pt { width: 80px; }
.sep { width: 1px; height: 26px; background: var(--line); margin-right: 5px; }
.wide { margin: 0 6px 0 7px; }
.size { width: 27px; justify-content: flex-start; }
.aa { width: 37px; font-size: 12px; padding-bottom: 4px; }
.aa small { font-size: 12px; margin-top: 6px; color: #b8b8b8; }
.select { position: relative; height: 22px; background: var(--field); border: 1px solid #666; border-radius: 2px; color: var(--ink); }
.select select { width: 100%; height: 100%; appearance: none; background: none; border: 0; padding: 0 8px; outline: 0; }
.select .i10 { position: absolute; right: 2px; top: 6px; color: #b4b4b4; }
.smooth { width: 96px; }
.aligns { display: flex; gap: 2px; }
.aligns button { width: 24px; height: 26px; border-radius: 2px; }
.aligns svg { width: 14px; height: 14px; }
.aligns .on { background: #363636; border: 1px solid #666; }
.colour { width: 27px; height: 18px; background: #fff; border: 1px solid #2a2a2a; margin-right: 5px; }
.colour + .sep { margin-right: 0; }
.c40 { width: 41px; border-right: 1px solid var(--line); }
.right { display: flex; margin-left: auto; padding-right: 9px; gap: 12px; }
.ws { gap: 6px; margin-left: 2px; }

/* body columns */
.body { flex: 1; min-height: 0; display: flex; border-bottom: 1px solid var(--line); border-right: 1px solid var(--line); }
.strip { height: 12px; background: var(--dark); display: flex; align-items: center; border-bottom: 1px solid var(--line); }
.strip svg { width: 8px; height: 6px; }
.tools { width: 41px; border-left: 1px solid var(--line); border-right: 3px solid var(--line); flex: none; }
.tools .strip { padding-left: 5px; }
.grip { height: 16px; background: repeating-linear-gradient(90deg, #3f3f3f 0 1px, #0000 1px 2px) 9px 3px / 20px 4px no-repeat; }
.toollist button { position: relative; width: 31px; height: 26px; margin-left: 3px; }
.toollist svg { width: 18px; height: 18px; }
.toollist button::after { content: ""; position: absolute; right: 2px; bottom: 3px; border: 2px solid; border-color: #0000 #b4b4b4 #b4b4b4 #0000; }
.toollist .solo::after { display: none; }
.toollist .on { background: #363636; border: 1px solid #666; border-radius: 2px; }
.mini { display: flex; gap: 6px; padding: 5px 0 5px 4px; }
.mini svg { width: 11px; height: 11px; }
.swatches { display: grid; grid-template-columns: 10px 8px 10px; grid-template-rows: 10px 8px 10px; padding-left: 4px; margin-bottom: 6px; }
.swatches button { background: #f00; border: 1px solid #fff; outline: 1px solid #222; }
.swatches .bg { grid-area: 2 / 2 / 4 / 4; }
.swatches .fg { grid-area: 1 / 1 / 3 / 3; z-index: 1; }

.work { flex: 1; min-width: 0; display: flex; flex-direction: column; }
.tabs { display: flex; height: 28px; background: var(--dark); border-bottom: 1px solid var(--line); flex: none; }
.tab { display: flex; align-items: center; justify-content: center; color: #9a9a9a; border-right: 1px solid var(--line); white-space: nowrap; }
.tab.on { background: var(--bg); color: var(--ink); margin-bottom: -1px; }
.pmenu { margin-left: auto; width: 20px; }
.doctabs { height: 29px; }
.doctabs .tab { width: 214px; padding: 0 10px; justify-content: space-between; }
.doctabs button { color: #b4b4b4; font-size: 12px; }
.viewport { flex: 1; min-height: 0; display: flex; }
.vscroll { width: 16px; background: #4a4a4a; flex: none; }
.canvas { flex: 1; min-width: 0; background: #282828; overflow: hidden; display: flex; align-items: center; justify-content: center; }
.artboard { position: relative; width: 854px; height: 480px; background: #fff; flex: none; }
.sketch { position: absolute; inset: 0; }
.note { position: absolute; left: 457px; top: 72px; font: 900 48px/84px "Noto Sans CJK JP", sans-serif; font-feature-settings: normal; color: #1000ff; -webkit-text-stroke: 2px #1000ff; white-space: nowrap; }
.guide { position: absolute; background: #4ff; }
.v { width: 1px; top: -400px; bottom: -400px; }
.h { height: 1px; left: -2000px; right: -2000px; margin-top: -1px; }
.v.g05 { left: 5%; } .v.g10 { left: 10%; } .v.g90 { left: 90%; } .v.g95 { left: 95%; }
.h.g05 { top: 5%; } .h.g10 { top: 10%; } .h.g90 { top: 90%; } .h.g95 { top: 95%; }
.status { display: flex; height: 17px; background: #4a4a4a; flex: none; }
.zoom { width: 48px; padding-left: 3px; font-size: 12px; background: #464646; }
.file { width: 184px; display: flex; align-items: center; justify-content: space-between; padding: 0 3px 0 30px; background: var(--bg); }

/* timeline */
.timeline { height: 419px; flex: none; display: flex; flex-direction: column; border-top: 2px solid var(--line); }
.timeline .tab { width: 66px; }
.tlhead, .row { display: grid; grid-template-columns: 266px 1fr 27px; }
.tlhead { height: 38px; border-bottom: 1px solid var(--line); flex: none; grid-template-columns: 266px 1fr 43px; }
.play { display: flex; align-items: center; border-right: 1px solid var(--line); }
.play button { width: 31px; height: 30px; }
.play svg { width: 12px; height: 12px; }
.play .snd { width: 24px; }
.play .gear { width: 40px; }
.play .big { width: 33px; }
.play .big svg { width: 16px; height: 14px; }
.tsep { width: 1px; height: 30px; background: var(--line); margin-right: 1px; }
.caret { position: relative; }
.caret::after { content: ""; position: absolute; right: 2px; bottom: 1px; border: 2px solid; border-color: currentColor #0000 #0000; }
.gear.caret::after { right: 9px; bottom: 5px; }
.ruler { position: relative; display: grid; grid-template-columns: repeat(5, 146px) 1fr; padding-left: 81px; border-right: 1px solid var(--line); line-height: 16px; text-align: center; background: linear-gradient(var(--line), var(--line)) 0 20px / 100% 1px no-repeat; }
.ruler span { position: relative; }
.ruler span::after { content: ""; position: absolute; left: 50%; top: 16px; width: 1px; height: 8px; background: var(--line); }
.ruler .last { justify-self: end; margin-right: 13px; }
.ruler .last::after { height: 11px; }
.cached { position: absolute; left: 9px; bottom: 0; width: 28px; height: 2px; background: #5b9c8c; }
.area { position: absolute; left: 2px; bottom: 0; width: 7px; height: 16px; border: 1px solid #ddd; border-radius: 2px; background: linear-gradient(#eee, #eee) 1px 4px / 1px 6px no-repeat, linear-gradient(#eee, #eee) 3px 4px / 1px 6px no-repeat, #555; }
.tracks { flex: 1; display: flex; min-height: 0; background: var(--mid); }
.rows { flex: 1; position: relative; align-self: flex-start; background: var(--bg); }
.row { border-bottom: 1px solid var(--line); }
.group { height: 23px; } .prop { height: 20px; } .track { height: 42px; } .audio { height: 28px; }
.name { display: flex; align-items: center; border-right: 1px solid var(--line); padding-right: 5px; }
.lane { border-right: 1px solid var(--line); padding: 1px 0 1px 9px; display: flex; }
.fold { width: 14px; height: 11px; }
.name b { font-size: 12px; }
.group .name { padding-left: 6px; gap: 9px; padding-top: 1px; }
.group .fold { margin-left: -1px; margin-right: 1px; }
.prop .name { padding-left: 68px; gap: 11px; font-size: 12px; }
.track .name { padding-left: 26px; gap: 10px; }
.track .film { width: 11px; height: 13px; margin-left: auto; }
.name button { width: 12px; height: 11px; margin-left: -8px; color: #b4b4b4; }
.audio .name { padding-left: 9px; gap: 10px; }
.spk { width: 14px; height: 12px; margin-left: auto; }
.audio .name button { margin-left: -9px; }
.sel .name { background: var(--sel); }
.sel .name button { background: #4a4a4a; }
.group .lane > *, .prop .lane > *, .track .lane > * { flex: 1; }
.lane .short { flex: 0 0 85px; }
.grey { background: var(--sel); border: 1px solid #8c8c8c; border-radius: 3px; }
.grey:not(.short), .purple:not(.short) { border-right: 0; border-radius: 3px 0 0 3px; }
.prop .lane { padding-top: 0; padding-bottom: 0; }
.band { background: #595959; }
.purple { display: flex; gap: 4px; background: #7c5fac; border: 1px solid #a793cb; border-radius: 3px; padding: 1px; }
.purple .i10 { margin-top: 3px; color: #d6cbe8; }
.thumb { width: 62px; background-color: #fff; }
.picked { border: 2px solid #f4f4f4; justify-content: space-between; padding: 1px 1px 1px 0; }
.picked .i10 { margin-top: 2px; }
.end { width: 10px; height: 12px; margin-top: 1px; }
.add { display: flex; align-items: center; justify-content: center; padding-right: 2px; }
.playhead { position: absolute; left: 273px; top: -20px; bottom: 0; width: 1px; background: #e01010; }
.playhead svg { position: absolute; left: -7px; top: -14px; width: 14px; height: 16px; }
.tlfoot { display: flex; align-items: center; height: 20px; border-top: 1px solid var(--line); flex: none; padding-left: 5px; }
.tlfoot > button { width: 19px; }
.tlfoot > button + button { margin-left: 10px; }
.tlfoot b { margin-left: 35px; width: 107px; font-size: 12px; }
.fps { width: 80px; }
.m1 { width: 11px; height: 6px; }
.m2 { width: 17px; height: 9px; }
.tlfoot input { appearance: none; background: none; width: 84px; height: 18px; margin: 0 14px 0 16px; }
.tlfoot input::-webkit-slider-runnable-track { height: 3px; background: var(--sel); margin-bottom: 8px; }
.tlfoot input::-webkit-slider-thumb { appearance: none; width: 11px; height: 10px; margin-top: 5px; background: #f0f0f0; clip-path: polygon(50% 0, 100% 60%, 100% 100%, 0 100%, 0 60%); }
.hscroll { flex: 1; display: flex; align-items: center; align-self: stretch; background: #4a4a4a; margin: 0 16px 0 6px; padding-left: 4px; color: #8c8c8c; }
.hscroll i { width: 139px; height: 16px; margin-left: 3px; background: var(--sel); }
.push { margin-left: auto; margin-right: 6px; }

/* icon dock */
.dock { width: 43px; flex: none; border: solid var(--line); border-width: 0 3px; }
.dock .strip { justify-content: flex-end; padding-right: 5px; }
.grp { padding: 8px 0 4px; border-bottom: 1px solid var(--line); background: repeating-linear-gradient(90deg, #3f3f3f 0 1px, #0000 1px 2px) 9px 3px / 20px 4px no-repeat; }
.grp button { width: 37px; height: 28px; }
.grp svg { width: 18px; height: 18px; }
.grp .i20 { width: 20px; }
.grp .char { font: 17px/20px "Noto Sans", sans-serif; }

/* right panels */
.panels { width: 285px; flex: none; display: flex; flex-direction: column; background: var(--bg); }
.panels .strip { justify-content: flex-end; padding-right: 6px; }
.panel { display: flex; flex-direction: column; }
.history { height: 219px; border-bottom: 3px solid var(--line); flex: none; }
.history .tab:nth-child(1) { width: 66px; }
.history .tab:nth-child(2) { width: 40px; }
.history .tab:nth-child(3) { width: 56px; }
.layers { flex: 1; min-height: 0; }
.layers .tab:nth-child(1) { width: 50px; }
.layers .tab:nth-child(2) { width: 59px; }
.scrollbox { flex: 1; min-height: 0; display: flex; background: var(--mid); }
.list { flex: 1; }
.snap { display: flex; align-items: center; height: 33px; gap: 6px; padding: 1px 4px; border-bottom: 2px solid #707070; background: var(--bg); }
.pic { width: 32px; height: 18px; }
.state { display: flex; align-items: center; height: 22px; background: var(--sel); padding-left: 6px; }
.box { width: 11px; height: 11px; border: 1px solid #4a4a4a; border-width: 1px 0 0 1px; margin-right: 14px; }
.state span { margin-left: 12px; }
.foot { height: 25px; border-top: 1px solid var(--line); display: flex; justify-content: flex-end; align-items: center; flex: none; padding-right: 23px; gap: 6px; }
.foot button { width: 21px; height: 18px; }
.foot svg { width: 14px; height: 14px; }
.history .foot { gap: 9px; }
.foot .fx { font: italic 16px/16px "Liberation Serif", serif; }
.bar { display: flex; align-items: center; height: 29px; padding: 0 4px; border-bottom: 1px solid var(--line); flex: none; }
.bar.filter { height: 33px; padding-top: 4px; }
.bar.lock { height: 31px; border: 0; padding-bottom: 2px; }
.kind { width: 119px; }
.kind select { padding-left: 22px; }
.mag { position: absolute; left: 8px; top: 5px; width: 10px; height: 10px; }
.blend { width: 155px; }
.ficons, .licons { display: flex; }
.ficons { margin-left: 14px; }
.ficons button { width: 24px; }
.ficons svg { width: 13px; height: 13px; }
.toggle { position: relative; width: 8px; height: 17px; border-radius: 4px; background: #3a3a3a; margin-left: auto; align-items: flex-start; }
.toggle::before { content: ""; width: 8px; height: 8px; border-radius: 4px; background: #e8e8e8; }
.bar label { margin-left: auto; margin-right: 5px; }
.pct { width: 54px; height: 19px; }
.lbl { padding-left: 3px; width: 37px; white-space: nowrap; }
.licons button { width: 22px; }
.licons svg { width: 14px; height: 14px; }
.list li { display: grid; grid-template-columns: 31px 1fr; height: 28px; border-bottom: 1px solid #4a4a4a; background: var(--bg); }
.list .lfolder { height: 26px; }
.list .lfolder + li { height: 27px; }
.list li > button { border-right: 1px solid #4a4a4a; }
.list li > button svg { width: 13px; height: 10px; }
.list li > div { display: flex; align-items: center; padding-left: 19px; gap: 9px; }
.list .lfolder > div { padding-left: 2px; gap: 4px; }
.lfolder .fold { margin-right: 6px; }
.list .sel > div { background: var(--sel); }
.lthumb { position: relative; width: 32px; height: 19px; border: 1px solid #2a2a2a; background-color: #fff; }
.frame { position: absolute; left: -3px; top: -3px; width: 36px; height: 23px; }
```
